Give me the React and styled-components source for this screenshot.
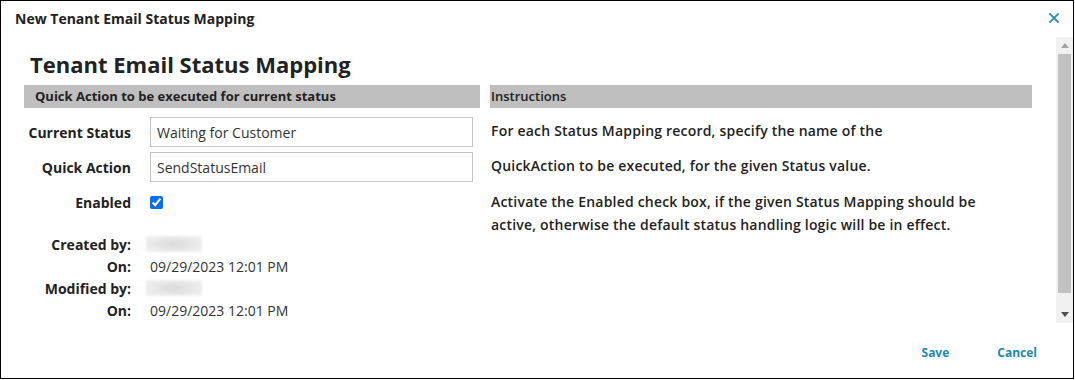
import React from 'react'
import styled, { createGlobalStyle } from 'styled-components'

const GlobalStyle = createGlobalStyle`
  html, body {
    margin: 0;
    padding: 0;
    background: #fff;
  }
  body {
    font-family: 'Open Sans', 'Noto Sans', Arial, sans-serif;
    color: #333;
  }
  * {
    box-sizing: border-box;
  }
`

const Frame = styled.div`
  width: 1074px;
  height: 379px;
  border: 1px solid #000;
  display: flex;
  flex-direction: column;
  background: #fff;
`

const Header = styled.div`
  height: 36px;
  display: flex;
  justify-content: space-between;
  align-items: flex-start;
  padding: 9px 14px 0 14px;
`

const DialogTitle = styled.div`
  font-size: 14px;
  line-height: 18px;
  font-weight: 700;
  color: #222;
`

const CloseButton = styled.button`
  border: none;
  background: none;
  padding: 0;
  margin-top: 3px;
  width: 10px;
  height: 10px;
  display: flex;
  cursor: pointer;
`

const Body = styled.div`
  height: 286px;
  display: flex;
`

const Content = styled.div`
  flex: 1;
  overflow: hidden;
  padding: 12px 21px 0 23px;
`

const Heading = styled.h1`
  margin: 0 0 6px 0;
  padding-left: 6px;
  font-size: 22px;
  line-height: 30px;
  font-weight: 700;
  color: #222;
`

const Columns = styled.div`
  display: grid;
  grid-template-columns: 456px 542px;
  column-gap: 10px;
  align-items: start;
`

const Band = styled.div`
  height: 23px;
  line-height: 23px;
  background: #bfbfbf;
  padding-left: ${({ $indent }) => $indent}px;
  font-size: ${({ $size }) => $size}px;
  font-weight: ${({ $weight }) => $weight};
  color: #222;
`

const Form = styled.div`
  display: flex;
  flex-direction: column;
  padding-top: 9px;
`

const FieldRow = styled.div`
  display: grid;
  grid-template-columns: 107px 323px;
  column-gap: 19px;
  align-items: center;
  margin-top: ${({ $gap }) => $gap || 0}px;
  height: ${({ $h }) => $h}px;
`

const Label = styled.label`
  text-align: right;
  font-size: 14px;
  font-weight: 700;
  color: #222;
  white-space: nowrap;
`

const TextInput = styled.input`
  width: 323px;
  height: 30px;
  border: 1px solid #c4c4c4;
  padding: 0 6px;
  font-family: 'Open Sans', 'Noto Sans', Arial, sans-serif;
  font-size: 14px;
  color: #333;
  outline: none;
`

const CheckBox = styled.input`
  width: 13px;
  height: 13px;
  margin: 0;
  accent-color: #0a6cf5;
`

const Meta = styled.div`
  display: flex;
  flex-direction: column;
  margin-top: 17px;
`

const MetaRow = styled.div`
  display: grid;
  grid-template-columns: 107px auto;
  column-gap: 19px;
  align-items: center;
  height: 22px;
`

const MetaValue = styled.span`
  font-size: 14px;
  color: #333;
`

const Redacted = styled.span`
  display: block;
  width: 56px;
  height: 16px;
  margin-left: -4px;
  background: radial-gradient(ellipse at center, #d9d9d9 0%, #e9e9e9 55%, #f3f3f3 100%);
  filter: blur(1px);
`

const Instructions = styled.div`
  display: flex;
  flex-direction: column;
  padding: 0 20px 0 1px;
`

const Para = styled.p`
  margin: ${({ $gap }) => $gap}px 0 0 0;
  font-size: 14px;
  line-height: 23px;
  font-weight: 600;
  letter-spacing: 0.2px;
  color: #222;
`

const Scrollbar = styled.div`
  width: 17px;
  display: flex;
  flex-direction: column;
  background: #f1f1f1;
`

const ScrollButton = styled.div`
  height: 17px;
  display: flex;
  align-items: center;
  justify-content: center;
`

const Track = styled.div`
  flex: 1;
  padding: 0 2px;
`

const Thumb = styled.div`
  height: 239px;
  background: #c1c1c1;
`

const Footer = styled.div`
  flex: 1;
  display: flex;
  justify-content: flex-end;
  align-items: center;
  gap: 48px;
  padding: 3px 36px 0 0;
`

const LinkButton = styled.button`
  border: none;
  background: none;
  padding: 0;
  font-family: 'Open Sans', 'Noto Sans', Arial, sans-serif;
  font-size: 12px;
  font-weight: 700;
  color: #1f88ad;
  cursor: pointer;
`

const Arrow = ({ up }) => (
  <svg width="8" height="5" viewBox="0 0 8 5">
    <path
      d={up ? 'M0 5 L4 0 L8 5 Z' : 'M0 0 L8 0 L4 5 Z'}
      fill={up ? '#a3a3a3' : '#505050'}
    />
  </svg>
)

const App = () => {
  return (
    <>
      <GlobalStyle />
      <Frame>
        <Header>
          <DialogTitle>New Tenant Email Status Mapping</DialogTitle>
          <CloseButton aria-label="Close">
            <svg width="10" height="10" viewBox="0 0 10 10">
              <path
                d="M1 1 L9 9 M9 1 L1 9"
                stroke="#2a8fb5"
                strokeWidth="1.8"
                strokeLinecap="square"
              />
            </svg>
          </CloseButton>
        </Header>
        <Body>
          <Content>
            <Heading>Tenant Email Status Mapping</Heading>
            <Columns>
              <div>
                <Band $indent={11} $size={13} $weight={700}>
                  Quick Action to be executed for current status
                </Band>
                <Form>
                  <FieldRow $h={30}>
                    <Label>Current Status</Label>
                    <TextInput defaultValue="Waiting for Customer" />
                  </FieldRow>
                  <FieldRow $h={30} $gap={5}>
                    <Label>Quick Action</Label>
                    <TextInput defaultValue="SendStatusEmail" />
                  </FieldRow>
                  <FieldRow $h={28} $gap={6}>
                    <Label>Enabled</Label>
                    <CheckBox type="checkbox" defaultChecked />
                  </FieldRow>
                  <Meta>
                    <MetaRow>
                      <Label>Created by:</Label>
                      <Redacted />
                    </MetaRow>
                    <MetaRow>
                      <Label>On:</Label>
                      <MetaValue>09/29/2023 12:01 PM</MetaValue>
                    </MetaRow>
                    <MetaRow>
                      <Label>Modified by:</Label>
                      <Redacted />
                    </MetaRow>
                    <MetaRow>
                      <Label>On:</Label>
                      <MetaValue>09/29/2023 12:01 PM</MetaValue>
                    </MetaRow>
                  </Meta>
                </Form>
              </div>
              <div>
                <Band $indent={1} $size={13} $weight={600}>
                  Instructions
                </Band>
                <Instructions>
                  <Para $gap={11}>
                    For each Status Mapping record, specify the name of the
                  </Para>
                  <Para $gap={12}>
                    QuickAction to be executed, for the given Status value.
                  </Para>
                  <Para $gap={13}>
                    Activate the Enabled check box, if the given Status Mapping should be
                    active, otherwise the default status handling logic will be in effect.
                  </Para>
                </Instructions>
              </div>
            </Columns>
          </Content>
          <Scrollbar>
            <ScrollButton>
              <Arrow up />
            </ScrollButton>
            <Track>
              <Thumb />
            </Track>
            <ScrollButton>
              <Arrow />
            </ScrollButton>
          </Scrollbar>
        </Body>
        <Footer>
          <LinkButton>Save</LinkButton>
          <LinkButton>Cancel</LinkButton>
        </Footer>
      </Frame>
    </>
  )
}

export default App
